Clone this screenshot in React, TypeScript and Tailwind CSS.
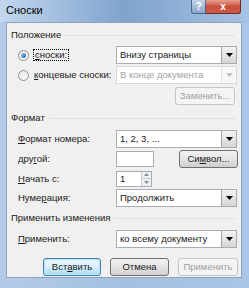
import React from 'react'

const font = { fontFamily: '"Liberation Sans", "Noto Sans", sans-serif' }

const Arrow = ({ disabled = false }: { disabled?: boolean }) => (
  <div
    className={`w-[15px] h-full flex items-center justify-center border-l ${
      disabled ? 'border-[#e3e3e3] bg-[#f7f7f7]' : 'border-[#9ea3a8] bg-gradient-to-b from-[#f3f3f3] to-[#d6d6d6]'
    }`}
  >
    <svg width="7" height="4" viewBox="0 0 7 4">
      <path d="M0 0 H7 L3.5 4 Z" fill={disabled ? '#bdbdbd' : '#000'} />
    </svg>
  </div>
)

const Select = ({ value, disabled = false }: { value: string; disabled?: boolean }) => (
  <div
    className={`w-[121px] h-[18px] flex border bg-white ${
      disabled ? 'border-[#d9d9d9] text-[#a3a3a3]' : 'border-[#a9acb2] text-[#1a1a1a]'
    }`}
  >
    <div className="flex-1 px-[3px] flex items-center leading-none">{value}</div>
    <Arrow disabled={disabled} />
  </div>
)

const Button = ({
  children,
  w,
  kind = 'normal',
}: {
  children: React.ReactNode
  w: string
  kind?: 'normal' | 'default' | 'disabled'
}) => {
  const cls =
    kind === 'disabled'
      ? 'border-[#c2c6c9] bg-[#f4f4f4] text-[#a0a0a0]'
      : kind === 'default'
        ? 'border-[#3c7fb1] bg-gradient-to-b from-[#eaf6fd] via-[#d9f0fc] to-[#a7d9f5] text-[#1a1a1a] shadow-[inset_0_0_0_1px_#bfe7f9]'
        : 'border-[#707070] bg-gradient-to-b from-[#f2f2f2] via-[#e4e4e4] to-[#cfcfcf] text-[#1a1a1a]'
  return (
    <div className={`${w} h-[18px] flex items-center justify-center rounded-[3px] border leading-none ${cls}`}>
      {children}
    </div>
  )
}

const GroupHeader = ({ title }: { title: string }) => (
  <div className="h-[14px] flex items-center gap-[4px] pl-[4px] pr-[6px]">
    <span className="leading-none">{title}</span>
    <div className="flex-1 h-px bg-[#dde1e6]" />
  </div>
)

const Row = ({ label, children, h = 'h-[18px]' }: { label: React.ReactNode; children: React.ReactNode; h?: string }) => (
  <div className={`${h} flex items-center`}>
    <div className="w-[109px] pl-[11px] leading-none">{label}</div>
    {children}
  </div>
)

const Radio = ({ checked }: { checked: boolean }) => (
  <div className="w-[11px] h-[11px] rounded-full border border-[#8e8f8f] bg-gradient-to-br from-[#e6e6e6] to-[#fbfbfb] flex items-center justify-center">
    {checked && <div className="w-[5px] h-[5px] rounded-full bg-gradient-to-br from-[#9bd1f4] to-[#0d5aa6]" />}
  </div>
)

export default function App() {
  return (
    <div
      className="w-[249px] h-[288px] overflow-hidden bg-gradient-to-r from-[#b3cbe6] via-[#a3c0e1] to-[#aac6e6] flex flex-col text-[9.5px] text-[#1a1a1a]"
      style={font}
    >
      <div className="h-[22px] flex items-start bg-gradient-to-r from-[#c3d7ee] via-[#7fa3cd] to-[#a6c2e3]">
        <div className="pl-[6px] pt-[5px] text-[11px] leading-none text-black">Сноски</div>
        <div className="ml-auto mr-[8px] flex">
          <div className="w-[15px] h-[14px] border border-[#4e6987] border-t-0 rounded-bl-[3px] bg-gradient-to-b from-[#c2d3e8] to-[#8aa6c8] flex items-center justify-center text-white text-[10px] font-bold leading-none">
            ?
          </div>
          <div className="w-[35px] h-[14px] border border-[#6e2b22] border-t-0 border-l-0 rounded-br-[3px] bg-gradient-to-b from-[#e6a193] via-[#c74f3c] to-[#cf5b46] flex items-center justify-center text-white text-[10px] font-bold leading-none">
            x
          </div>
        </div>
      </div>
      <div className="ml-[6px] mr-[7px] h-[256px] bg-[#f0f0f0] border border-[#8da3bf] flex flex-col">
        <div className="mt-[5px]">
          <GroupHeader title="Положение" />
        </div>
        <div className="mt-[4px] flex flex-col gap-[2px]">
          <div className="h-[18px] flex items-center">
            <div className="w-[109px] pl-[11px] flex items-center gap-[4px]">
              <Radio checked />
              <span className="border border-dotted border-black px-px leading-none">
                <u>с</u>носки:
              </span>
            </div>
            <Select value="Внизу страницы" />
          </div>
          <div className="h-[18px] flex items-center">
            <div className="w-[109px] pl-[11px] flex items-center gap-[5px]">
              <Radio checked={false} />
              <span className="leading-none whitespace-nowrap">
                <u>к</u>онцевые сноски:
              </span>
            </div>
            <Select value="В конце документа" disabled />
          </div>
        </div>
        <div className="mt-[3px] flex justify-end pr-[6px]">
          <Button w="w-[60px]" kind="disabled">
            Заменить...
          </Button>
        </div>
        <div className="mt-[6px]">
          <GroupHeader title="Формат" />
        </div>
        <div className="mt-[5px] flex flex-col gap-[2px]">
          <Row label={<><u>Ф</u>ормат номера:</>}>
            <Select value="1, 2, 3, ..." />
          </Row>
          <Row label={<>дру<u>г</u>ой:</>}>
            <div className="w-[38px] h-[16px] bg-white border border-[#a9acb2]" />
            <div className="ml-[25px]">
              <Button w="w-[59px]">
                Си<u>м</u>вол...
              </Button>
            </div>
          </Row>
          <Row label={<><u>Н</u>ачать с:</>} h="h-[17px]">
            <div className="w-[36px] h-[16px] flex bg-white border border-[#a9acb2]">
              <div className="flex-1 pl-[3px] flex items-center leading-none">1</div>
              <div className="w-[10px] flex flex-col border-l border-[#c9cdd2]">
                <div className="flex-1 flex items-center justify-center bg-[#eef1f4] border-b border-[#c9cdd2]">
                  <svg width="5" height="3" viewBox="0 0 5 3"><path d="M0 3 L2.5 0 L5 3 Z" fill="#8b9097" /></svg>
                </div>
                <div className="flex-1 flex items-center justify-center bg-[#eef1f4]">
                  <svg width="5" height="3" viewBox="0 0 5 3"><path d="M0 0 H5 L2.5 3 Z" fill="#8b9097" /></svg>
                </div>
              </div>
            </div>
          </Row>
          <Row label={<>Нуме<u>р</u>ация:</>}>
            <Select value="Продолжить" />
          </Row>
        </div>
        <div className="mt-[4px]">
          <GroupHeader title="Применить изменения" />
        </div>
        <div className="mt-[5px]">
          <Row label={<><u>П</u>рименить:</>}>
            <Select value="ко всему документу" />
          </Row>
        </div>
        <div className="mt-[10px] flex pl-[36px] gap-[9px]">
          <Button w="w-[58px]" kind="default">
            Вст<u>а</u>вить
          </Button>
          <Button w="w-[59px]">Отмена</Button>
          <Button w="w-[60px]" kind="disabled">
            Применить
          </Button>
        </div>
      </div>
    </div>
  )
}
